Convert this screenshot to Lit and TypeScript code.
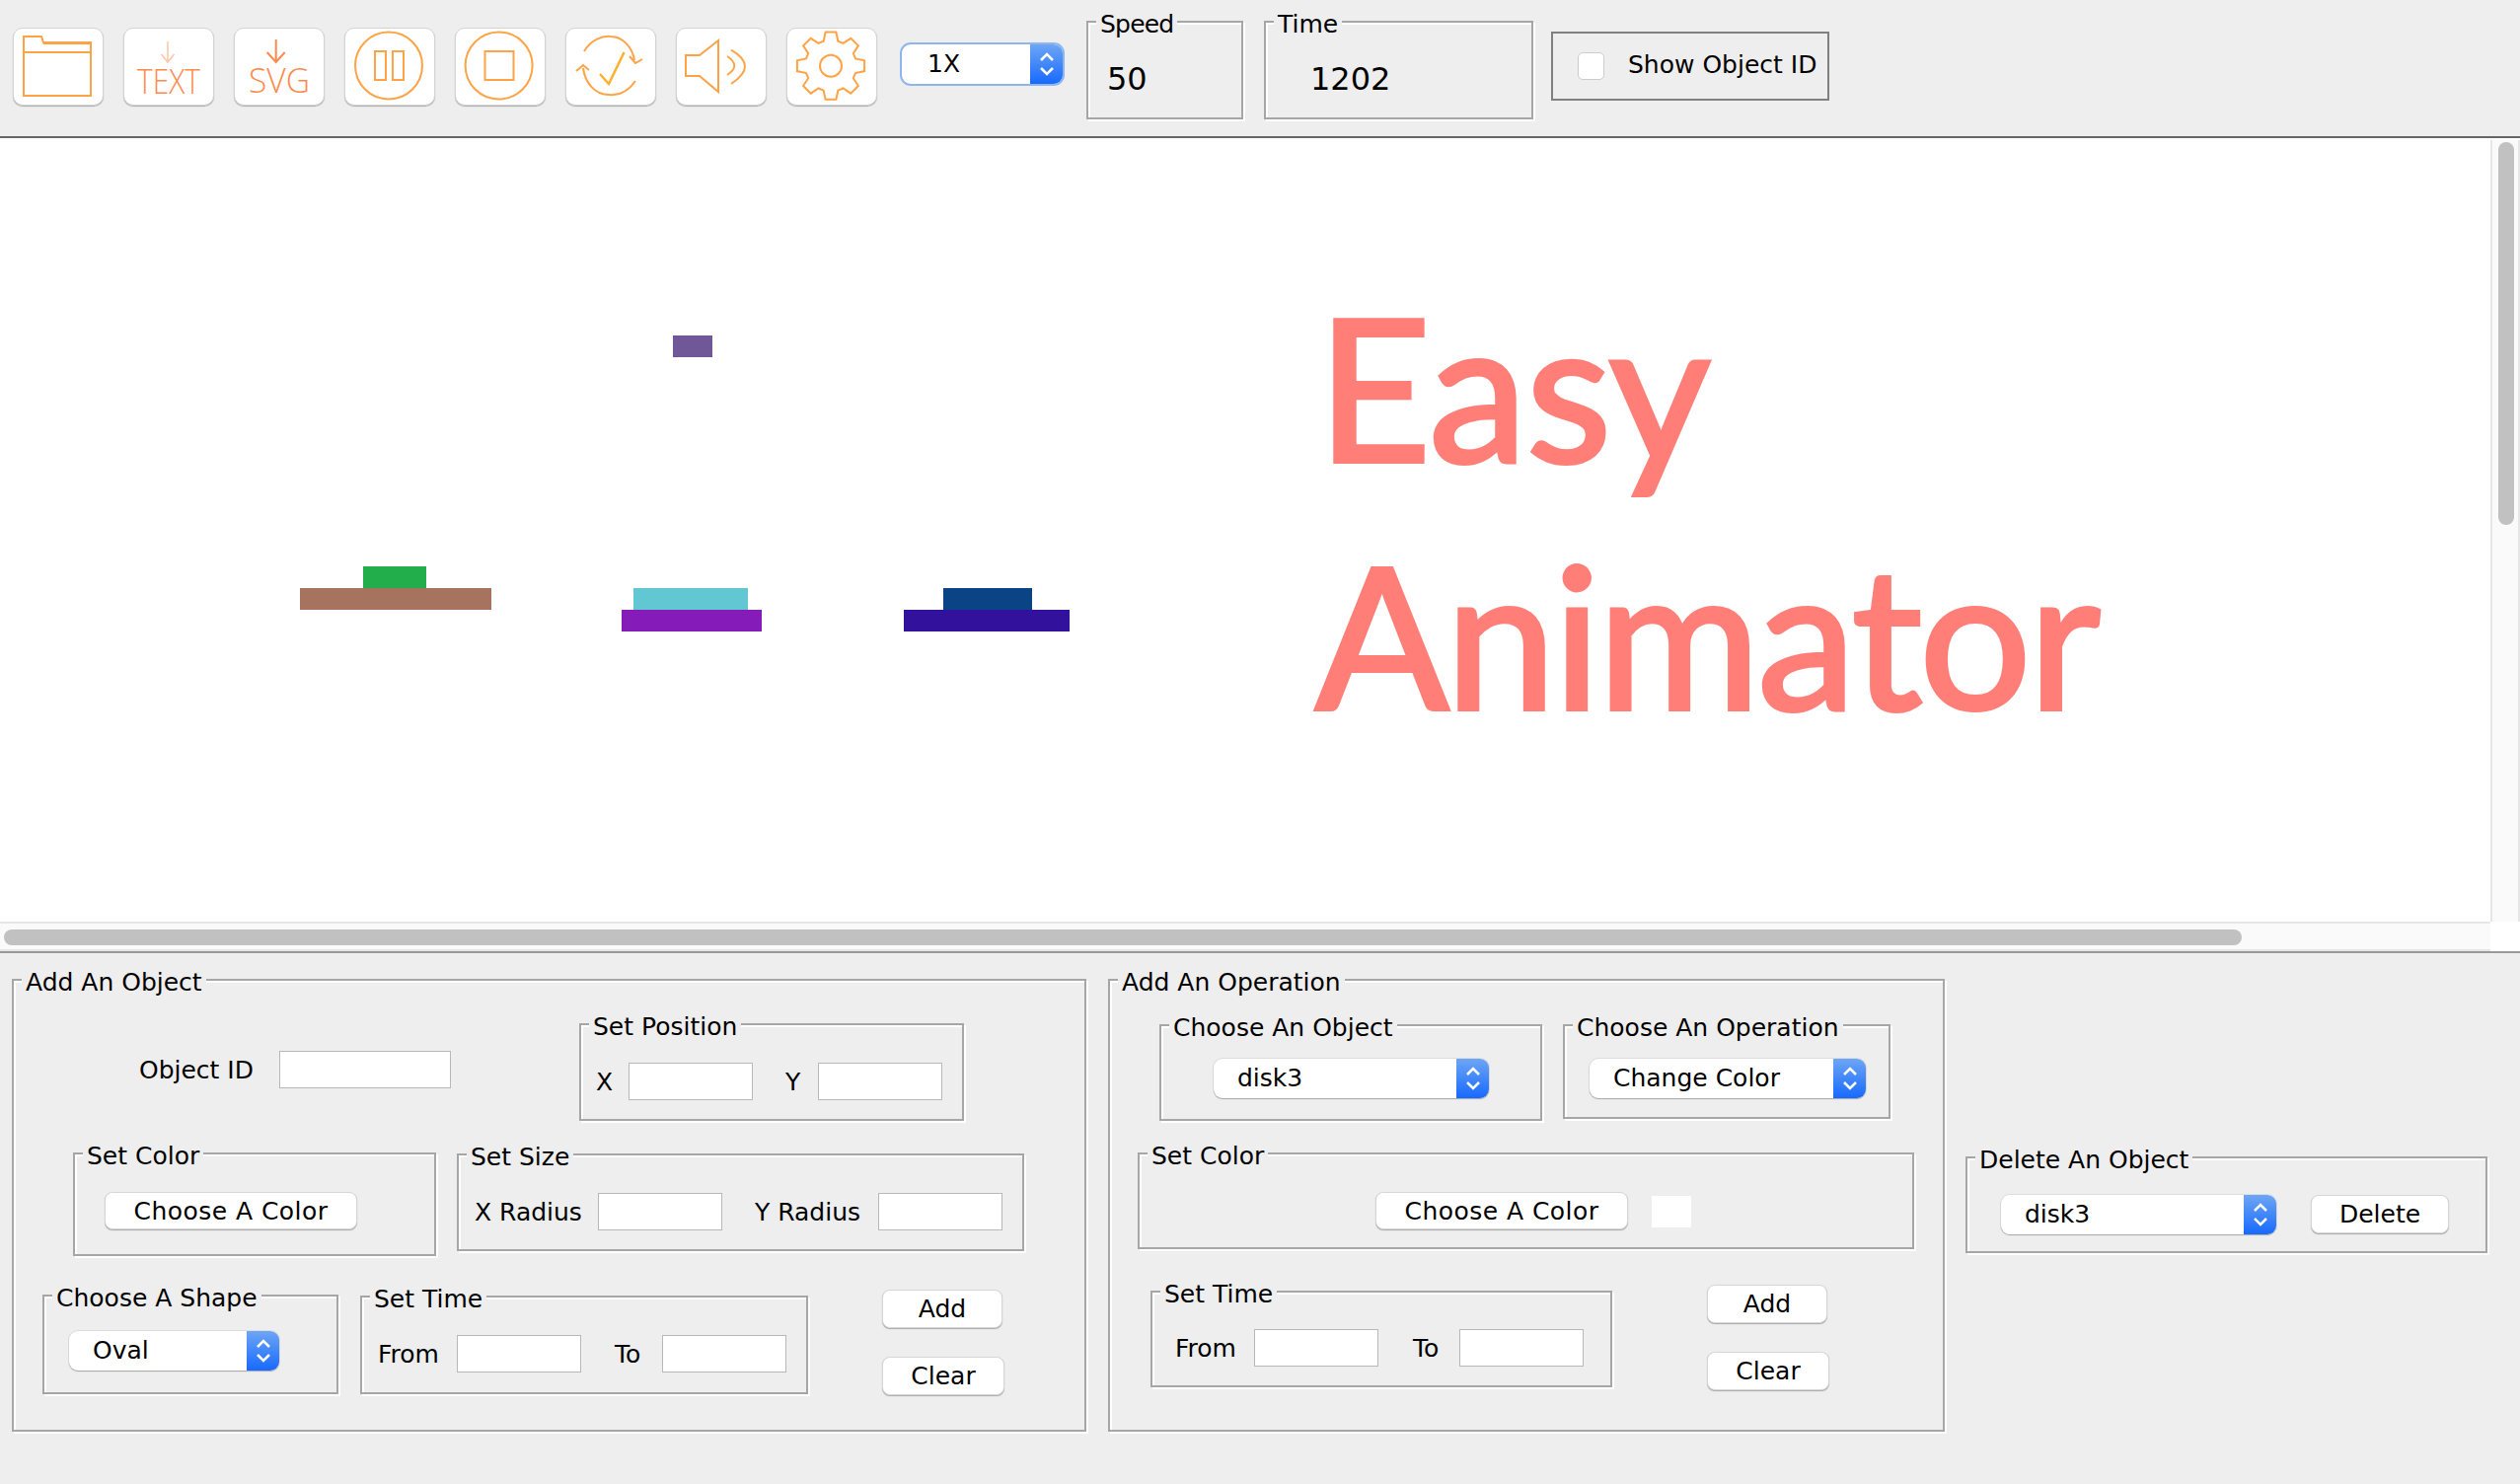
import { LitElement, html, css, svg } from "lit";
import { customElement } from "lit/decorators.js";

// gear outline, 8 teeth round (45, 38.7)
function gearPath() {
  const cx = 45;
  const cy = 38.7;
  const pts: string[] = [];
  for (let i = 0; i < 8; i++) {
    const a = (i * Math.PI) / 4 - Math.PI / 2;
    const step = Math.PI / 4;
    const list = [
      [26, a - step * 0.36],
      [34.5, a - step * 0.2],
      [34.5, a + step * 0.2],
      [26, a + step * 0.36],
    ];
    for (const [r, t] of list) {
      pts.push(`${(cx + r * Math.cos(t)).toFixed(1)},${(cy + r * Math.sin(t)).toFixed(1)}`);
    }
  }
  return "M" + pts.join("L") + "Z";
}

const ICONS = [
  svg`<path class="o" d="M11 69V9H29L31 15H79V69Z"/><path class="o" d="M11 25H79"/><path class="o t" d="M31 15.5H79"/>`,
  svg`<path class="pale" d="M45 14V35M38.500 27L45 35L51.500 27"/>
    <text class="ico-text" x="14" y="67" textLength="64" lengthAdjust="spacingAndGlyphs">TEXT</text>`,
  svg`<path class="r" d="M42.700 12V35M33.700 25L42.700 35L51.700 25"/>
    <text class="ico-text" x="15" y="66" textLength="62" lengthAdjust="spacingAndGlyphs">SVG</text>`,
  svg`<circle class="o" cx="45" cy="38.500" r="34"/><path class="o" d="M31 24H42V53H31ZM49 24H60V53H49Z"/>`,
  svg`<circle class="o" cx="44.600" cy="38.500" r="34"/><path class="o" d="M30.500 24H59.500V53H30.500Z"/>`,
  svg`<path class="o" d="M19 24C26 12 38 8 46 9C58 9 68 20 70 33"/><path class="o" d="M65 29L71 36L78 32"/>
    <path class="o" d="M71 54C64 64 54 69 44 68C30 68 20 56 18 41"/><path class="o" d="M11 44L18 38L24 43"/>
    <path class="c" d="M35 47L44 57L59.500 25"/>`,
  svg`<path class="o" d="M10 28H24L43 13V65L24 49H10Z"/><path class="o" d="M52 29Q66.600 38.700 52 48"/><path class="o" d="M56 22.700Q84 38.700 56 57"/>`,
  svg`<path class="o" d="${gearPath()}"/><circle class="o" cx="45" cy="38.700" r="11"/>`,
];

const SHAPES = [
  { x: 682, y: 198, w: 40, h: 22, c: "#705898" },
  { x: 368, y: 432, w: 64, h: 22, c: "#22ae4a" },
  { x: 304, y: 454, w: 194, h: 22, c: "#a6745e" },
  { x: 642, y: 454, w: 116, h: 22, c: "#61c7d3" },
  { x: 630, y: 476, w: 142, h: 22, c: "#851bb9" },
  { x: 956, y: 454, w: 90, h: 22, c: "#0a4485" },
  { x: 916, y: 476, w: 168, h: 22, c: "#32129d" },
];

@customElement("app-root")
export class AppRoot extends LitElement {
  static styles = css`
    :host {
      display: block;
      width: 2554px;
      height: 1504px;
      overflow: hidden;
      background: #eeeeee;
      color: #000;
      font-family: "DejaVu Sans", sans-serif;
      font-size: 25px;
    }
    * {
      box-sizing: border-box;
    }

    /* toolbar */
    .toolbar {
      display: flex;
      align-items: flex-start;
      height: 140px;
      padding-left: 13px;
      border-bottom: 2px solid #666666;
    }
    .tool {
      width: 92px;
      height: 79px;
      margin: 28px 20px 0 0;
      padding: 0;
      background: #fff;
      border: 1px solid #d4d4d4;
      border-radius: 10px;
      box-shadow: 0 1px 1px #aaaaaa;
    }
    .tool svg {
      display: block;
      margin: -1px;
      fill: none;
      stroke-width: 2;
    }
    .o {
      stroke: #ffa347;
    }
    .t {
      stroke-width: 3;
    }
    .c {
      stroke: #ffb02e;
      stroke-width: 2.500;
    }
    .r {
      stroke: #ff8a4d;
    }
    .pale {
      stroke: #ffc4a6;
      stroke-width: 1.500;
    }
    .ico-text {
      fill: #ff8a4d;
      stroke: none;
      font-family: "Open Sans", sans-serif;
      font-size: 35px;
      font-weight: 300;
    }
    .speed-combo {
      margin: 45px 0 0 5px;
    }
    .speed-box {
      width: 159px;
      height: 100px;
      margin: 21px 0 0 24px;
    }
    .speed-legend {
      letter-spacing: -0.8px;
    }
    .time-box {
      width: 273px;
      height: 100px;
      margin: 21px 0 0 21px;
    }
    .num {
      font-size: 32px;
      line-height: 40px;
      padding-top: 37px;
    }
    .speed-box .num {
      padding-left: 19px;
    }
    .time-box .num {
      padding-left: 45px;
    }
    .show {
      display: flex;
      align-items: center;
      width: 282px;
      height: 70px;
      margin: 32px 0 0 18px;
      padding-left: 25px;
      border: 2px solid #808080;
    }
    .show-text {
      margin-bottom: 3px;
    }
    .check {
      appearance: none;
      width: 27px;
      height: 28px;
      margin: 0 24px 0 0;
      background: #fff;
      border: 1px solid #cccccc;
      border-radius: 5px;
    }

    /* stage and scrollbars */
    .viewport {
      display: flex;
      height: 794px;
      padding-top: 2px;
      background: #fff;
    }
    .canvas {
      position: relative;
      flex: 1;
      overflow: hidden;
      background: #fff;
    }
    .shape {
      position: absolute;
    }
    .title {
      position: absolute;
      font-family: Lato, sans-serif;
      font-size: 200px;
      line-height: 200px;
      letter-spacing: -2.700px;
      color: #ff7f78;
      -webkit-text-stroke: 4px #ff7f78;
      white-space: nowrap;
    }
    .title.easy {
      left: 1335px;
      top: 149px;
      letter-spacing: -1px;
    }
    .title.animator {
      left: 1333px;
      top: 400px;
    }
    .vbar {
      width: 30px;
      padding: 2px 4px 0 6px;
      background: #fafafa;
      border-left: 2px solid #e6e6e6;
      border-right: 2px solid #e6e6e6;
    }
    .vthumb {
      width: 16px;
      height: 388px;
      background: #c1c1c1;
      border-radius: 8px;
    }
    .hrow {
      display: flex;
      height: 32px;
      background: #fff;
      border-bottom: 2px solid #999999;
    }
    .hbar {
      flex: 1;
      padding: 6px 0 0 4px;
      background: #fafafa;
      border-top: 2px solid #e6e6e6;
      border-bottom: 2px solid #e6e6e6;
    }
    .hthumb {
      width: 2268px;
      height: 16px;
      background: #c1c1c1;
      border-radius: 8px;
    }
    .corner {
      width: 30px;
      background: #fff;
    }

    /* lower panels */
    .bottom {
      display: flex;
      align-items: flex-start;
      padding: 26px 0 0 12px;
    }
    .group {
      border: 2px solid #a6a6a6;
      box-shadow: 2px 2px 0 #fff, inset 2px 2px 0 #fff;
    }
    .legend {
      width: fit-content;
      height: 30px;
      margin: -13px 0 -17px 8px;
      padding: 0 4px;
      background: #eeeeee;
      line-height: 30px;
      white-space: nowrap;
    }
    .row {
      display: flex;
      align-items: flex-start;
    }
    .body {
      display: flex;
      align-items: flex-start;
    }
    .lbl {
      height: 38px;
      line-height: 40px;
      white-space: nowrap;
    }
    input.field {
      display: block;
      width: 126px;
      height: 38px;
      margin: 0;
      background: #fff;
      border: 1px solid #b8b8b8;
      border-radius: 0;
    }
    .btn {
      height: 39px;
      margin: 0;
      padding: 0;
      color: #000;
      font: inherit;
      background: #fff;
      border: 1px solid #d6d6d6;
      border-radius: 8px;
      box-shadow: 0 1px 1px #a8a8a8;
    }
    .combo {
      display: flex;
      height: 40px;
      background: #fff;
      border-radius: 9px;
      box-shadow: 0 1px 1px #a8a8a8, 0 0 0 1px #dddddd;
    }
    .combo-text {
      flex: 1;
      padding-left: 24px;
      line-height: 40px;
    }
    .combo-arrow {
      display: flex;
      align-items: center;
      justify-content: center;
      width: 33px;
      background: linear-gradient(#6ea6f5, #1769ff);
      border-radius: 0 9px 9px 0;
    }
    .combo-arrow svg {
      fill: none;
      stroke: #fff;
      stroke-width: 2.500;
    }
    .focus {
      width: 163px;
      box-shadow: 0 0 0 2px #8db7ec;
    }
    .focus .combo-text {
      padding-left: 26px;
    }

    .panel-object {
      width: 1089px;
      height: 459px;
    }
    .panel-op {
      width: 848px;
      height: 459px;
      margin-left: 22px;
    }
    .panel-delete {
      width: 529px;
      height: 98px;
      margin: 180px 0 0 21px;
    }

    .r-id {
      margin-top: 43px;
      padding-left: 127px;
    }
    .l-id {
      width: 142px;
      margin-top: 28px;
    }
    input.f-id {
      width: 174px;
      margin-top: 28px;
    }
    .g-pos {
      width: 390px;
      height: 99px;
      margin-left: 130px;
    }
    .b-pos {
      padding: 38px 0 0 15px;
    }
    .l-x {
      width: 33px;
    }
    .l-y {
      width: 33px;
      margin-left: 33px;
    }

    .r-size {
      margin-top: 32px;
      padding-left: 60px;
    }
    .g-color {
      width: 368px;
      height: 105px;
    }
    .b-color {
      padding: 38px 0 0 30px;
    }
    .b-color .btn,
    .b-opcolor .btn {
      width: 256px;
      height: 38px;
      letter-spacing: 0.45px;
    }
    .g-size {
      width: 575px;
      height: 99px;
      margin: 1px 0 0 21px;
    }
    .b-size {
      padding: 38px 0 0 16px;
    }
    .l-xr {
      width: 125px;
    }
    .l-yr {
      width: 125px;
      margin-left: 33px;
    }

    .r-last {
      margin-top: 34px;
      padding-left: 29px;
    }
    .g-shape {
      width: 300px;
      height: 101px;
      margin-top: 5px;
    }
    .b-shape {
      padding: 35px 0 0 25px;
    }
    .c-shape {
      width: 213px;
    }
    .g-time {
      width: 454px;
      height: 100px;
      margin: 6px 0 0 22px;
    }
    .b-time {
      padding: 38px 0 0 16px;
    }
    .l-from {
      width: 80px;
    }
    .l-to {
      width: 48px;
      margin-left: 34px;
    }
    .actions {
      display: flex;
      flex-direction: column;
      align-items: flex-start;
      gap: 29px;
      margin-left: 75px;
    }
    .a-add {
      width: 122px;
    }
    .a-clear {
      width: 124px;
    }

    .r-op {
      margin-top: 44px;
      padding-left: 50px;
    }
    .g-choose-obj {
      width: 388px;
      height: 98px;
    }
    .b-choose-obj {
      padding: 33px 0 0 53px;
    }
    .c-279 {
      width: 279px;
    }
    .g-choose-op {
      width: 332px;
      height: 96px;
      margin-left: 21px;
    }
    .b-choose-op {
      padding: 33px 0 0 25px;
    }
    .c-280 {
      width: 280px;
    }
    .r-opcolor {
      margin-top: 32px;
      padding-left: 28px;
    }
    .g-opcolor {
      width: 787px;
      height: 98px;
    }
    .b-opcolor {
      padding: 38px 0 0 239px;
    }
    .swatch {
      width: 40px;
      height: 32px;
      margin: 4px 0 0 24px;
      background: #fff;
    }
    .r-optime {
      margin-top: 36px;
      padding-left: 41px;
    }
    .g-optime {
      width: 468px;
      height: 98px;
      margin-top: 6px;
    }
    .b-optime {
      padding: 37px 0 0 23px;
    }
    .l-opto {
      width: 47px;
      margin-left: 35px;
    }
    .actions-op {
      margin-left: 96px;
    }
    .b-delete {
      padding: 37px 0 0 34px;
    }
    .a-delete {
      width: 140px;
      margin-left: 35px;
    }
  `;

  private combo(text: string, cls: string) {
    return html`<div class="combo ${cls}">
      <div class="combo-text">${text}</div>
      <div class="combo-arrow">
        <svg width="18" height="26" viewBox="0 0 18 26">
          <path d="M3 9L9 3L15 9M3 17L9 23L15 17" />
        </svg>
      </div>
    </div>`;
  }

  render() {
    return html`
      <div class="toolbar">
        ${ICONS.map(
          (icon) => html`<button class="tool">
            <svg width="91" height="79" viewBox="0 0 91 79">${icon}</svg>
          </button>`
        )}
        <div class="speed-combo">${this.combo("1X", "focus")}</div>
        <div class="group speed-box">
          <div class="legend speed-legend">Speed</div>
          <div class="num">50</div>
        </div>
        <div class="group time-box">
          <div class="legend">Time</div>
          <div class="num">1202</div>
        </div>
        <label class="show"
          ><input class="check" type="checkbox" /><span class="show-text">Show Object ID</span></label
        >
      </div>

      <div class="viewport">
        <div class="canvas">
          ${SHAPES.map(
            (s) => html`<div
              class="shape"
              style="left:${s.x}px;top:${s.y}px;width:${s.w}px;height:${s.h}px;background:${s.c}"
            ></div>`
          )}
          <div class="title easy">Easy</div>
          <div class="title animator">Animator</div>
        </div>
        <div class="vbar"><div class="vthumb"></div></div>
      </div>
      <div class="hrow">
        <div class="hbar"><div class="hthumb"></div></div>
        <div class="corner"></div>
      </div>

      <div class="bottom">
        <div class="group panel-object">
          <div class="legend">Add An Object</div>
          <div class="row r-id">
            <div class="lbl l-id">Object ID</div>
            <input class="field f-id" />
            <div class="group g-pos">
              <div class="legend">Set Position</div>
              <div class="body b-pos">
                <div class="lbl l-x">X</div>
                <input class="field" />
                <div class="lbl l-y">Y</div>
                <input class="field" />
              </div>
            </div>
          </div>
          <div class="row r-size">
            <div class="group g-color">
              <div class="legend">Set Color</div>
              <div class="body b-color"><button class="btn">Choose A Color</button></div>
            </div>
            <div class="group g-size">
              <div class="legend">Set Size</div>
              <div class="body b-size">
                <div class="lbl l-xr">X Radius</div>
                <input class="field" />
                <div class="lbl l-yr">Y Radius</div>
                <input class="field" />
              </div>
            </div>
          </div>
          <div class="row r-last">
            <div class="group g-shape">
              <div class="legend">Choose A Shape</div>
              <div class="body b-shape">${this.combo("Oval", "c-shape")}</div>
            </div>
            <div class="group g-time">
              <div class="legend">Set Time</div>
              <div class="body b-time">
                <div class="lbl l-from">From</div>
                <input class="field" />
                <div class="lbl l-to">To</div>
                <input class="field" />
              </div>
            </div>
            <div class="actions">
              <button class="btn a-add">Add</button>
              <button class="btn a-clear">Clear</button>
            </div>
          </div>
        </div>

        <div class="group panel-op">
          <div class="legend">Add An Operation</div>
          <div class="row r-op">
            <div class="group g-choose-obj">
              <div class="legend">Choose An Object</div>
              <div class="body b-choose-obj">${this.combo("disk3", "c-279")}</div>
            </div>
            <div class="group g-choose-op">
              <div class="legend">Choose An Operation</div>
              <div class="body b-choose-op">${this.combo("Change Color", "c-280")}</div>
            </div>
          </div>
          <div class="row r-opcolor">
            <div class="group g-opcolor">
              <div class="legend">Set Color</div>
              <div class="body b-opcolor">
                <button class="btn">Choose A Color</button>
                <div class="swatch"></div>
              </div>
            </div>
          </div>
          <div class="row r-optime">
            <div class="group g-optime">
              <div class="legend">Set Time</div>
              <div class="body b-optime">
                <div class="lbl l-from">From</div>
                <input class="field" />
                <div class="lbl l-opto">To</div>
                <input class="field" />
              </div>
            </div>
            <div class="actions actions-op">
              <button class="btn a-add">Add</button>
              <button class="btn a-clear">Clear</button>
            </div>
          </div>
        </div>

        <div class="group panel-delete">
          <div class="legend">Delete An Object</div>
          <div class="body b-delete">
            ${this.combo("disk3", "c-279")}
            <button class="btn a-delete">Delete</button>
          </div>
        </div>
      </div>
    `;
  }
}
